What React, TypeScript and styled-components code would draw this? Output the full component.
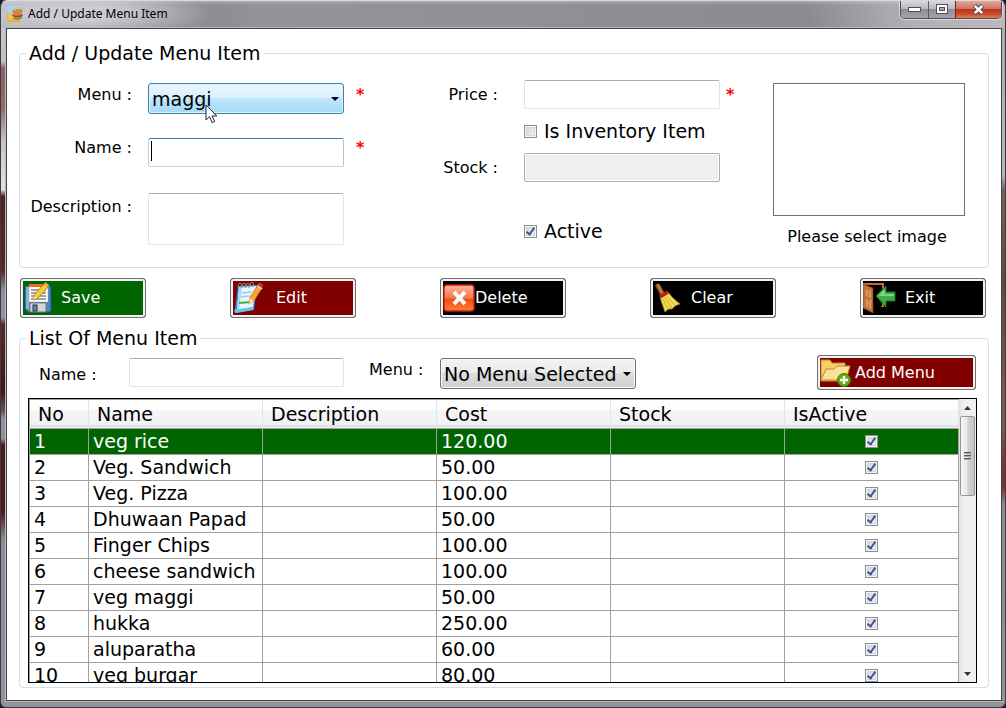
import React from 'react';
import styled, { createGlobalStyle, css } from 'styled-components';

const GlobalStyle = createGlobalStyle`
  *, *::before, *::after { box-sizing: border-box; }
  body {
    margin: 0;
    background: #1b1b1f;
    color: #000;
    font-family: 'DejaVu Sans', Verdana, sans-serif;
    font-size: 19px;
    line-height: 24px;
  }
  button, input, select, textarea { font: inherit; color: inherit; margin: 0; }
`;

const Window = styled.div`
  height: 100vh;
  min-height: 560px;
  display: grid;
  grid-template-rows: 27px minmax(0, 1fr) 6px;
  border: 1px solid #3c3c42;
  border-top-color: #d9d9de;
  border-radius: 7px 7px 6px 6px;
  background: #92929b;
  overflow: hidden;
`;

const TitleBar = styled.header`
  display: flex;
  align-items: flex-start;
  justify-content: space-between;
  padding: 0 3px 0 6px;
  background:
    radial-gradient(ellipse 130px 24px at 80px 12px, rgba(214, 214, 220, 0.8) 30%, rgba(200, 200, 206, 0) 100%),
    linear-gradient(to bottom, rgba(255, 255, 255, 0.25) 0, rgba(255, 255, 255, 0) 4px),
    linear-gradient(72deg, #b4b4ba 0, #96969e 14%, #8d8d96 22%, #93939b 26%, #8f8f98 55%, #8a8a93 80%, #b0b0b4 90%, #bbbbbe 100%);
`;

const Caption = styled.h1`
  display: flex;
  align-items: center;
  gap: 5px;
  margin: 0;
  height: 25px;
  font: 400 12px/16px 'Noto Sans', 'Segoe UI', sans-serif;
`;

const CaptionButtons = styled.div`
  display: flex;
  border: 1px solid #4b4b52;
  border-top: 0;
  border-radius: 0 0 5px 5px;
  box-shadow: 0 0 0 1px rgba(235, 235, 240, 0.7);
  overflow: hidden;
`;

const CaptionButton = styled.button<{ $close?: boolean }>`
  display: grid;
  place-items: center;
  width: ${p => (p.$close ? 46 : 27)}px;
  height: 17px;
  padding: 0;
  border: 0;
  border-left: 1px solid ${p => (p.$close ? '#7b1f14' : '#5d5d64')};
  background: ${p =>
    p.$close
      ? 'linear-gradient(#dfa89b 0, #cf7562 45%, #bb351c 50%, #c8472a 75%, #df8060 100%)'
      : 'linear-gradient(#d8d8dc 0, #b9b9be 45%, #8e8e96 50%, #a4a4ab 100%)'};
  &:first-child { border-left: 0; }
`;

const Frame = styled.div`
  display: grid;
  grid-template-columns: 5px minmax(0, 1fr) 3px;
  min-height: 0;
`;

const FrameEdge = styled.div<{ $right?: boolean }>`
  background: ${p =>
    p.$right
      ? `linear-gradient(to bottom, #aeaeb2 0, #b4b4b6 22%, #74625c 24%, #5b4c46 38%, #7a5a4c 55%, #6d5c55 60%,
         #7b3a2e 64%, #7a2f25 68%, #8d8d95 71%, #92929b 100%)`
      : `linear-gradient(to bottom, #c6c6cc 0, #c0c0c4 5%, #8b5f5f 6%, #946b69 12%, #c9c5c7 17%, #e2e2e4 24%,
         #532022 25%, #5a2726 36%, #8d8f97 39%, #93959d 43%, #5a2828 44%, #451416 54%, #6e5354 57%, #8f9299 58%,
         #8f9299 61%, #4b1a1b 62%, #4f1c1d 72%, #8b8b93 76%, #92929b 100%)`};
`;

const Client = styled.main`
  display: flex;
  flex-direction: column;
  min-width: 0;
  min-height: 0;
  padding: 12px;
  border: 1px solid #42424a;
  box-shadow: 0 0 0 1px #b9b9c0;
  background: #fff;
`;

const Group = styled.fieldset<{ $grow?: boolean }>`
  display: flex;
  flex-direction: column;
  min-width: 0;
  min-height: 0;
  margin: 0;
  padding: 0;
  border: 1px solid #d5dfe5;
  border-radius: 4px;
  ${p => p.$grow && css`flex: 1;`}
`;

const GroupTitle = styled.legend`
  margin-left: 6px;
  padding: 0 3px;
  font-size: 19px;
  line-height: 24px;
`;

const Form = styled.div`
  display: grid;
  grid-template-columns: 412fr 333fr 192fr;
  padding: 15px 23px 20px 8px;
`;

const FormColumn = styled.div<{ $inset?: boolean }>`
  display: flex;
  flex-direction: column;
  min-width: 0;
  padding-top: ${p => (p.$inset ? 3 : 0)}px;
`;

const Field = styled.div<{ $label: number; $below?: number; $middle?: boolean }>`
  display: grid;
  grid-template-columns: ${p => p.$label}px 196px auto;
  column-gap: ${p => (p.$middle ? 26 : 16)}px;
  align-items: ${p => (p.$middle ? 'center' : 'start')};
  margin-bottom: ${p => p.$below ?? 0}px;
`;

const Label = styled.label<{ $drop?: number }>`
  padding-top: ${p => p.$drop ?? 0}px;
  font-size: 16px;
  line-height: 20px;
  text-align: right;
  white-space: nowrap;
`;

const Required = styled.span<{ $drop?: number; $near?: boolean }>`
  margin-left: ${p => (p.$near ? -20 : -4)}px;
  padding-top: ${p => p.$drop ?? 0}px;
  color: #f00;
  font-size: 16px;
  font-weight: 700;
  line-height: 20px;
`;

const box = css`
  width: 100%;
  border: 1px solid #e2e3ea;
  border-top-color: #abadb3;
  border-radius: 2px;
  background: #fff;
  outline: 0;
`;

const TextBox = styled.input<{ $focused?: boolean }>`
  ${box}
  display: block;
  height: 29px;
  padding: 0 3px;
  ${p => p.$focused && css`border-color: #3d7bad #a4c9e3 #b7d9ed #b5cfe7;`}
  &:disabled {
    border-color: #adadb0;
    background: #efefef;
    box-shadow: inset 0 0 0 1px #fff;
  }
`;

const TextArea = styled.textarea`
  ${box}
  display: block;
  height: 52px;
  padding: 2px 3px;
  resize: none;
`;

const Overlaid = styled.div`
  position: relative;
`;

const Caret = styled.span`
  position: absolute;
  left: 3px;
  top: 3px;
  width: 1px;
  height: 20px;
  background: #000;
`;

const Pointer = styled.svg`
  position: absolute;
  left: 57px;
  top: 21px;
  z-index: 1;
`;

const SelectWrap = styled.div`
  position: relative;
  width: 196px;
  &::after {
    content: '';
    position: absolute;
    right: 5px;
    top: 14px;
    border: 4px solid transparent;
    border-top-color: #000;
    border-bottom: 0;
    pointer-events: none;
  }
`;

const Select = styled.select<{ $hot?: boolean }>`
  appearance: none;
  display: block;
  width: 100%;
  height: 31px;
  padding: 0 16px 0 3px;
  border: 1px solid ${p => (p.$hot ? '#3c7fb1' : '#707070')};
  border-radius: 3px;
  outline: 0;
  box-shadow: inset 0 0 0 1px ${p => (p.$hot ? '#dff3fc' : '#fafafa')};
  background: ${p =>
    p.$hot
      ? 'linear-gradient(#eaf6fd 0, #d9f0fc 49%, #bee6fd 50%, #a7d9f5 100%)'
      : 'linear-gradient(#f2f2f2 0, #ebebeb 49%, #dddddd 50%, #cfcfcf 100%)'};
  font-size: 19px;
`;

const CheckLabel = styled.label<{ $below?: number }>`
  display: flex;
  align-items: center;
  gap: 7px;
  margin: 0 0 ${p => p.$below ?? 0}px 84px;
  font-size: 19px;
  line-height: 24px;
  white-space: nowrap;
`;

const CheckBox = styled.input.attrs({ type: 'checkbox' })`
  appearance: none;
  display: inline-grid;
  place-items: center;
  flex: none;
  width: 13px;
  height: 13px;
  border: 1px solid #8e8f8f;
  background: linear-gradient(135deg, #cbcfd5 0, #f6f6f6 90%);
  box-shadow: inset 0 0 0 1px #f4f4f4, inset 0 0 0 2px #d4d7db;
  &:checked::before {
    content: '';
    width: 5px;
    height: 9px;
    border: solid #3f5495;
    border-width: 0 2px 2px 0;
    transform: translateY(-1px) rotate(35deg);
  }
`;

const ImagePicker = styled.button`
  height: 133px;
  padding: 0;
  border: 1px solid #707070;
  background: #fff;
`;

const ImageHint = styled.p`
  margin: 11px 0 0;
  padding-right: 4px;
  font-size: 16px;
  line-height: 20px;
  text-align: center;
  white-space: nowrap;
`;

const Toolbar = styled.div`
  display: flex;
  justify-content: space-between;
  padding: 10px 3px 8px 1px;
`;

const ActionButton = styled.button<{ $fill: string; $wide?: boolean; $gap: number }>`
  display: flex;
  align-items: center;
  gap: ${p => p.$gap}px;
  flex: none;
  width: ${p => (p.$wide ? 159 : 126)}px;
  height: ${p => (p.$wide ? 35 : 40)}px;
  padding: 0 0 0 2px;
  border: 1px solid #707070;
  border-radius: 3px;
  box-shadow: inset 0 0 0 2px #f3f3f3;
  background: ${p => p.$fill};
  color: #fff;
  font-size: 16px;
  line-height: 20px;
  svg { flex: none; }
`;

const Filter = styled.div`
  display: flex;
  align-items: flex-start;
  padding: 5px 12px 8px 19px;
`;

const FilterLabel = styled(Label)<{ $w: number }>`
  width: ${p => p.$w}px;
  text-align: left;
`;

const FilterName = styled.div`
  width: 215px;
  margin: 3px 25px 0 0;
`;

const FilterSelect = styled.div`
  margin: 3px auto 0 0;
`;

const Grid = styled.div`
  display: grid;
  grid-template-columns: minmax(0, 1fr) 17px;
  flex: 1;
  min-height: 0;
  margin: 0 11px 4px 8px;
  border: 1px solid #000;
  background: #fff;
`;

const Viewport = styled.div`
  overflow: hidden;
  border-top: 1px solid #a0a0a0;
  border-left: 1px solid #a0a0a0;
`;

const Table = styled.table`
  width: 100%;
  table-layout: fixed;
  border-collapse: separate;
  border-spacing: 0;
  font-size: 19px;
  text-align: left;
`;

const HeadCell = styled.th<{ $w?: number }>`
  width: ${p => (p.$w ? `${p.$w}px` : 'auto')};
  height: 29px;
  padding: 0 8px;
  border-right: 1px solid #e3e4e6;
  border-bottom: 1px solid #a0a0a0;
  background: linear-gradient(#fff 0, #fcfcfd 36%, #f4f5f7 38%, #f0f1f3 90%, #d5d5d5 92%, #f7f7f7 100%);
  font-weight: 400;
`;

const Row = styled.tr<{ $selected?: boolean }>`
  ${p => p.$selected && css`background: #006400; color: #fff;`}
`;

const Cell = styled.td<{ $center?: boolean }>`
  height: 26px;
  padding: 0 4px;
  border-right: 1px solid #a0a0a0;
  border-bottom: 1px solid #a0a0a0;
  line-height: 25px;
  white-space: nowrap;
  ${p => p.$center && css`text-align: center; line-height: 0;`}
`;

const ScrollBar = styled.div`
  display: grid;
  grid-template-rows: 17px 80px 1fr 17px;
  background: linear-gradient(to right, #e3e3e3 0, #f0f0f0 30%, #efefef 100%);
`;

const ScrollArrow = styled.button`
  display: grid;
  place-items: center;
  grid-row: auto;
  padding: 0;
  border: 0;
  background: transparent;
  &:last-child { grid-row: 4; }
`;

const Thumb = styled.div`
  display: flex;
  flex-direction: column;
  align-items: center;
  justify-content: center;
  gap: 1px;
  margin: 0 1px;
  border: 1px solid #979797;
  border-radius: 2px;
  background: linear-gradient(to right, #f5f5f5 0, #e9e9eb 45%, #d0d0d4 55%, #c4c4c8 100%);
`;

const Grip = styled.span`
  width: 7px;
  height: 2px;
  border-top: 1px solid #55555a;
  background: #a8a8ac;
`;

const AppIcon = () => (
  <svg width="16" height="16" viewBox="0 0 16 16" aria-hidden="true">
    <rect width="16" height="16" rx="3" fill="#a9d3ee" />
    <path d="M0 7l5 1 3 4 7 2v0q0 2-2 2H2q-2 0-2-2z" fill="#e9b03a" />
    <path d="M1 9l3 3M3 8l3 4M1 12l4 2" stroke="#f7df7a" strokeWidth="1" />
    <ellipse cx="10.500" cy="5.500" rx="5" ry="4" fill="#d08a3e" />
    <path d="M7 4q3-3 6-1" stroke="#f0c888" strokeWidth="1.200" fill="none" />
    <path d="M5 8q5 3 10.500 0v2q-5 3-10 0z" fill="#b5332a" />
    <path d="M6 11q5 2 9-1v2q-4 3-8 1z" fill="#5f9a36" />
  </svg>
);

const SaveIcon = () => (
  <svg width="30" height="32" viewBox="0 0 30 32" aria-hidden="true">
    <path d="M3 4h24l1 1v25H5l-3-3V5z" fill="#4d86c6" stroke="#1d4f8f" />
    <path d="M3 5h3v22H3z" fill="#86b4e2" />
    <rect x="6" y="3" width="19" height="17" fill="#fff" stroke="#9a9a9a" strokeWidth=".5" />
    <rect x="6" y="2" width="19" height="3" fill="#f26a1b" />
    <path d="M8 8h15M8 11h15M8 14h15M8 17h15" stroke="#444" />
    <rect x="7" y="21" width="16" height="9" fill="#d6d6d6" stroke="#777" />
    <rect x="10" y="23" width="4" height="6" fill="#5d86b5" stroke="#333" />
    <path d="M21 2l4 3-10 11-5 2 1-5z" fill="#f8cf2b" stroke="#9c7411" strokeWidth=".8" />
    <path d="M21 2l1-2 4 3-1 2z" fill="#e8b04a" />
    <path d="M10 18l1-4 3 2z" fill="#f3deb4" />
  </svg>
);

const EditIcon = () => (
  <svg width="31" height="32" viewBox="0 0 31 32" aria-hidden="true">
    <path d="M5 4l19-1-3 25-18 3q-3-1-1-4z" fill="#2b8fd6" />
    <path d="M6 5l17-1-3 21-16 3z" fill="#e7f5fd" />
    <path d="M6 5l3 0-3 22-2 1z" fill="#a5d8f5" />
    <path d="M2 27q2 1 4 0l15-2-1 3-17 3q-2-1-1-4z" fill="#6cc0ee" />
    <path d="M9 11l9-1M8 15l8-1" stroke="#9ccbe8" strokeWidth="1.500" />
    <path d="M6 21l11-1" stroke="#3fb526" strokeWidth="2" />
    <path d="M5 6q0-5 2-5t1 5M9 6q0-5 2-5t1 5M13 6q0-5 2-5t1 5M17 5q0-5 2-5t1 5" fill="none" stroke="#8a9096" strokeWidth="1" />
    <path d="M25 3l4 3-8 13-5 3 1-7z" fill="#f5a637" stroke="#c0701b" strokeWidth=".6" />
    <path d="M24 3q2-4 5-1 2 2 0 5z" fill="#bc3e29" />
    <path d="M24 4l5 3" stroke="#d5d5d5" strokeWidth="1.500" />
    <path d="M16 22l1-6 4 3z" fill="#f8ddb0" />
  </svg>
);

const DeleteIcon = () => (
  <svg width="32" height="28" viewBox="0 0 32 28" aria-hidden="true">
    <defs>
      <linearGradient id="del" x1="0" y1="0" x2="0" y2="1">
        <stop offset="0" stopColor="#fbb79d" />
        <stop offset=".5" stopColor="#f4774d" />
        <stop offset=".55" stopColor="#f2500f" />
        <stop offset="1" stopColor="#ff7a3c" />
      </linearGradient>
    </defs>
    <rect x="1" y="1" width="30" height="26" rx="3" fill="url(#del)" stroke="#c5220b" strokeWidth="1.500" />
    <path d="M11 8l11 12M22 8L11 20" stroke="#fff" strokeWidth="4" />
  </svg>
);

const ClearIcon = () => (
  <svg width="30" height="32" viewBox="0 0 30 32" aria-hidden="true">
    <path d="M5 4l5 9" stroke="#8a4a17" strokeWidth="5" strokeLinecap="round" />
    <path d="M5 3l4 8" stroke="#c98443" strokeWidth="2" strokeLinecap="round" />
    <path d="M7 15l8-5q4 6 12 12-5 1-8 5-4-1-7 3-3-8-5-15z" fill="#f4dc50" stroke="#a58412" strokeWidth=".7" />
    <path d="M10 17l5 10M12 16l7 10M14 15l8 8" stroke="#c9a92a" strokeWidth=".9" />
    <path d="M7 15l8-5" stroke="#c21d1d" strokeWidth="3.500" />
  </svg>
);

const ExitIcon = () => (
  <svg width="34" height="32" viewBox="0 0 34 32" aria-hidden="true">
    <path d="M0 1h21v6h-2V3H0z" fill="#c76a24" />
    <path d="M19 19h2v6h-3v-1h1z" fill="#c76a24" />
    <path d="M0 2l10 4v25l-10-5z" fill="#c4713a" stroke="#7c3c12" strokeWidth=".7" />
    <path d="M3 7l2 1v7l-2-1zM6 8l2 1v7l-2-1zM3 17l2 1v7l-2-1zM6 18l2 1v8l-2-1z" fill="#de9a5f" />
    <circle cx="2" cy="8" r="1" fill="#888" />
    <circle cx="8" cy="19" r="1" fill="#aaa" />
    <path d="M13 14L23 4v6h9v9h-9v6z" fill="#3fae49" stroke="#17752a" />
    <path d="M15 14l7-7v5h9v2z" fill="#7fd27f" />
  </svg>
);

const FolderIcon = () => (
  <svg width="31" height="29" viewBox="0 0 31 29" aria-hidden="true">
    <path d="M1 2h9l2 3h13v6l-3 12H1z" fill="#f6cf6b" stroke="#c08a2a" />
    <path d="M6 11h8l3-3h13l-4 14H1z" fill="#fbe29a" stroke="#c08a2a" />
    <circle cx="24" cy="22" r="6.500" fill="#5fae0e" stroke="#3c7b08" />
    <path d="M24 18v8M20 22h8" stroke="#fff" strokeWidth="2.400" />
  </svg>
);

const items: [string, string, string][] = [
  ['1', 'veg rice', '120.00'],
  ['2', 'Veg. Sandwich', '50.00'],
  ['3', 'Veg. Pizza', '100.00'],
  ['4', 'Dhuwaan Papad', '50.00'],
  ['5', 'Finger Chips', '100.00'],
  ['6', 'cheese sandwich', '100.00'],
  ['7', 'veg maggi', '50.00'],
  ['8', 'hukka', '250.00'],
  ['9', 'aluparatha', '60.00'],
  ['10', 'veg burgar', '80.00'],
];

export default function App() {
  return (
    <Window>
      <GlobalStyle />
      <TitleBar>
        <Caption><AppIcon />Add / Update Menu Item</Caption>
        <CaptionButtons>
          <CaptionButton aria-label="Minimize">
            <svg width="13" height="6" aria-hidden="true"><rect x=".5" y=".5" width="12" height="4" fill="#fff" stroke="#4d4d5c" /></svg>
          </CaptionButton>
          <CaptionButton aria-label="Maximize">
            <svg width="13" height="11" aria-hidden="true">
              <rect x=".5" y=".5" width="11" height="9" fill="#fff" stroke="#4d4d5c" />
              <rect x="3.500" y="3.500" width="5" height="3" fill="#a9a9b0" stroke="#4d4d5c" />
            </svg>
          </CaptionButton>
          <CaptionButton $close aria-label="Close">
            <svg width="13" height="11" aria-hidden="true">
              <path d="M2.500 1.500l8 8M10.500 1.500l-8 8" stroke="#4d4d5c" strokeWidth="4.500" />
              <path d="M2.800 1.800l7.400 7.400M10.200 1.800L2.800 9.200" stroke="#fff" strokeWidth="2.500" />
            </svg>
          </CaptionButton>
        </CaptionButtons>
      </TitleBar>
      <Frame>
        <FrameEdge />
        <Client>
          <Group>
            <GroupTitle>Add / Update Menu Item</GroupTitle>
            <Form>
              <FormColumn $inset>
                <Field $label={104} $below={24}>
                  <Label htmlFor="menu" $drop={2}>Menu :</Label>
                  <SelectWrap>
                    <Select id="menu" $hot><option>maggi</option></Select>
                    <Pointer width="13" height="20" viewBox="0 0 13 20" aria-hidden="true">
                      <path d="M1 1v15l3.500-3.300 2.700 6 2.500-1.200-2.700-5.500h4.800z" fill="#fff" stroke="#222233" />
                    </Pointer>
                  </SelectWrap>
                  <Required $drop={2}>*</Required>
                </Field>
                <Field $label={104} $below={26}>
                  <Label htmlFor="name">Name :</Label>
                  <Overlaid>
                    <TextBox id="name" $focused />
                    <Caret />
                  </Overlaid>
                  <Required>*</Required>
                </Field>
                <Field $label={104}>
                  <Label htmlFor="description" $drop={4}>Description :</Label>
                  <TextArea id="description" />
                </Field>
              </FormColumn>
              <FormColumn>
                <Field $label={58} $below={10} $middle>
                  <Label htmlFor="price">Price :</Label>
                  <TextBox id="price" />
                  <Required $near>*</Required>
                </Field>
                <CheckLabel $below={10}><CheckBox />Is Inventory Item</CheckLabel>
                <Field $label={58} $below={37} $middle>
                  <Label htmlFor="stock">Stock :</Label>
                  <TextBox id="stock" disabled />
                </Field>
                <CheckLabel><CheckBox defaultChecked />Active</CheckLabel>
              </FormColumn>
              <FormColumn $inset>
                <ImagePicker aria-label="Item image" />
                <ImageHint>Please select image</ImageHint>
              </FormColumn>
            </Form>
          </Group>

          <Toolbar>
            <ActionButton $fill="#006400" $gap={8}><SaveIcon />Save</ActionButton>
            <ActionButton $fill="#800000" $gap={12}><EditIcon />Edit</ActionButton>
            <ActionButton $fill="#000" $gap={0}><DeleteIcon />Delete</ActionButton>
            <ActionButton $fill="#000" $gap={8}><ClearIcon />Clear</ActionButton>
            <ActionButton $fill="#000" $gap={8}><ExitIcon />Exit</ActionButton>
          </Toolbar>

          <Group $grow>
            <GroupTitle>List Of Menu Item</GroupTitle>
            <Filter>
              <FilterLabel htmlFor="find-name" $w={90} $drop={10}>Name :</FilterLabel>
              <FilterName><TextBox id="find-name" /></FilterName>
              <FilterLabel htmlFor="find-menu" $w={71} $drop={5}>Menu :</FilterLabel>
              <FilterSelect>
                <SelectWrap>
                  <Select id="find-menu"><option>No Menu Selected</option></Select>
                </SelectWrap>
              </FilterSelect>
              <ActionButton $fill="#800000" $gap={4} $wide><FolderIcon />Add Menu</ActionButton>
            </Filter>
            <Grid>
              <Viewport>
                <Table>
                  <thead>
                    <tr>
                      <HeadCell $w={59}>No</HeadCell>
                      <HeadCell>Name</HeadCell>
                      <HeadCell>Description</HeadCell>
                      <HeadCell>Cost</HeadCell>
                      <HeadCell>Stock</HeadCell>
                      <HeadCell>IsActive</HeadCell>
                    </tr>
                  </thead>
                  <tbody>
                    {items.map(([no, name, cost], i) => (
                      <Row key={no} $selected={i === 0}>
                        <Cell>{no}</Cell>
                        <Cell>{name}</Cell>
                        <Cell />
                        <Cell>{cost}</Cell>
                        <Cell />
                        <Cell $center><CheckBox defaultChecked aria-label={`${name} is active`} /></Cell>
                      </Row>
                    ))}
                  </tbody>
                </Table>
              </Viewport>
              <ScrollBar>
                <ScrollArrow aria-label="Scroll up">
                  <svg width="7" height="4" aria-hidden="true"><path d="M0 4l3.500-4L7 4z" fill="#333" /></svg>
                </ScrollArrow>
                <Thumb><Grip /><Grip /><Grip /></Thumb>
                <ScrollArrow aria-label="Scroll down">
                  <svg width="7" height="4" aria-hidden="true"><path d="M0 0h7L3.500 4z" fill="#333" /></svg>
                </ScrollArrow>
              </ScrollBar>
            </Grid>
          </Group>
        </Client>
        <FrameEdge $right />
      </Frame>
    </Window>
  );
}
